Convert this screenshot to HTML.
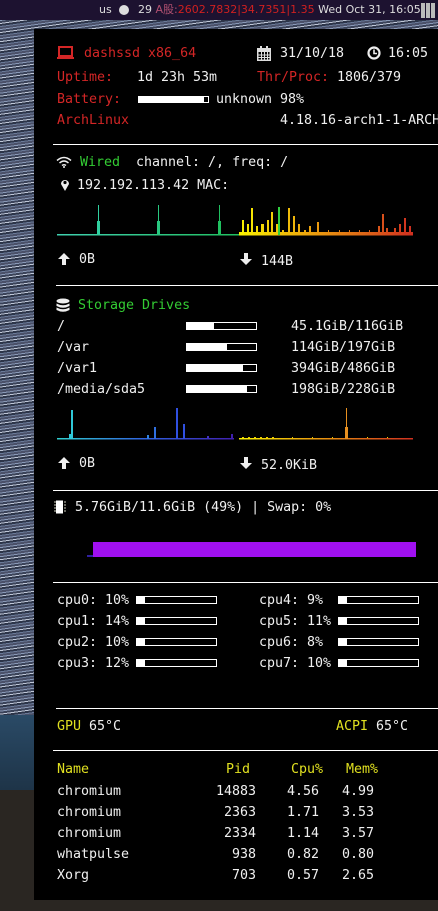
<!DOCTYPE html>
<html><head><meta charset="utf-8"><style>
*{margin:0;padding:0;box-sizing:border-box}
body{width:438px;height:911px;overflow:hidden;position:relative;background:#222;font-family:"DejaVu Sans Mono","Liberation Mono",monospace;font-size:13.3px;color:#f0f0f0}
#bar{position:absolute;left:0;top:0;width:438px;height:20px;background:#1d1230;font-family:"DejaVu Sans","Liberation Sans","Noto Sans CJK SC",sans-serif;font-size:11px;color:#ddd;line-height:20px;white-space:nowrap;overflow:hidden}
#bg{position:absolute;left:0;top:20px;width:438px;height:891px;
background:repeating-linear-gradient(172deg,#8a9ab8 0 1px,#3a4258 1px 3px,#c0c8d8 3px 4px,#2c3448 4px 6px,#6a7a98 6px 7px,#4a5068 7px 9px)}
#mt{position:absolute;left:0;top:715px;width:438px;height:75px;background:linear-gradient(#2a4a66,#1e3448)}
#gr{position:absolute;left:0;top:790px;width:438px;height:121px;background:#2a2622}
#p{position:absolute;left:34px;top:29px;width:404px;height:871px;background:#000}
.t{position:absolute;white-space:pre;line-height:16px}
.r{color:#d42626}.g{color:#33cc33}.y{color:#e0e020}
.hl{position:absolute;height:1px;background:#fff;right:0}
.b{position:absolute;height:8px;border:1px solid #fff}
.b i{display:block;height:100%;background:#fff}
.c{line-height:21px}
</style></head><body>
<div id="bg"></div><div id="mt"></div><div id="gr"></div>
<div id="bar"><span style="position:absolute;left:99px">us</span>
<span style="position:absolute;left:119px;top:5px;width:10px;height:10px;border-radius:50%;background:#ddd"></span>
<span style="position:absolute;left:138px">29 <span style="color:#b05070">A股:</span><span style="color:#d02020">2602.7832|34.7351|1.35</span> Wed Oct 31, 16:05</span>
<span style="position:absolute;left:421px;top:3px;width:15px;height:15px;background:repeating-linear-gradient(90deg,#bbb 0 4px,transparent 4px 5px),#1d1230"></span></div>
<div id="p"></div>

<svg style="position:absolute;left:57px;top:46px" width="17" height="14"><rect x="2" y="1" width="13" height="9" fill="none" stroke="#d42626" stroke-width="2"/><rect x="0" y="11" width="17" height="2" fill="#d42626"/></svg>
<div class="t r" style="left:84px;top:46px">dashssd x86_64</div>
<svg style="position:absolute;left:257px;top:46px" width="14" height="15"><rect x="0" y="2" width="14" height="13" fill="#ddd"/><rect x="1.5" y="6" width="11" height="7.5" fill="#000"/><path d="M1.5 9h11M1.5 11.5h11M4.5 6v8M7.5 6v8M10.5 6v8" stroke="#ddd"/><rect x="3" y="0" width="2" height="4" fill="#ddd"/><rect x="9" y="0" width="2" height="4" fill="#ddd"/></svg>
<div class="t" style="left:280px;top:46px">31/10/18</div>
<svg style="position:absolute;left:367px;top:46px" width="14" height="14"><circle cx="7" cy="7" r="5.5" fill="none" stroke="#eee" stroke-width="2.2"/><path d="M7 3.5v4h3" stroke="#eee" stroke-width="1.6" fill="none"/></svg>
<div class="t" style="left:388px;top:46px">16:05</div>
<div class="t r" style="left:57px;top:70px">Uptime:</div><div class="t" style="left:137px;top:70px">1d 23h 53m</div>
<div class="t r" style="left:257px;top:70px">Thr/Proc:</div><div class="t" style="left:337px;top:70px">1806/379</div>
<div class="t r" style="left:57px;top:92px">Battery:</div>
<div class="b" style="left:138px;top:96px;width:71px;height:7px"><i style="width:94%"></i></div>
<div class="t" style="left:216px;top:92px">unknown 98%</div>
<div class="t r" style="left:57px;top:113px">ArchLinux</div><div class="t" style="left:280px;top:113px">4.18.16-arch1-1-ARCH</div>
<div class="hl" style="left:53px;top:144px"></div>

<svg style="position:absolute;left:56px;top:156px" width="16" height="12"><path d="M1 4.5Q8 -1.5 15 4.5M3.5 7Q8 3 12.5 7M6 9.5Q8 8 10 9.5" stroke="#eee" stroke-width="1.5" fill="none"/><circle cx="8" cy="11" r="1" fill="#eee"/></svg>
<div class="t g" style="left:80px;top:155px">Wired</div><div class="t" style="left:136px;top:155px">channel: /, freq: /</div>
<svg style="position:absolute;left:60px;top:178px" width="10" height="14"><path d="M5 13L1 6A4 4 0 1 1 9 6Z" fill="#eee"/><circle cx="5" cy="4.5" r="1.6" fill="#000"/></svg>
<div class="t" style="left:77px;top:178px">192.192.113.42 MAC:</div>
<svg style="position:absolute;left:57px;top:200px" width="360" height="40">
<defs><linearGradient id="ga"><stop offset="0" stop-color="#40d0b0"/><stop offset="1" stop-color="#20c060"/></linearGradient>
<linearGradient id="gb"><stop offset="0" stop-color="#f8f000"/><stop offset="0.5" stop-color="#e89010"/><stop offset="1" stop-color="#d03020"/></linearGradient>
<linearGradient id="gc"><stop offset="0" stop-color="#30d0d0"/><stop offset="0.5" stop-color="#3060e0"/><stop offset="1" stop-color="#4020b0"/></linearGradient></defs>
<rect x="0" y="34" width="182" height="1.5" fill="url(#ga)"/>
<rect x="41" y="5" width="1" height="30" fill="#30d0a0"/><rect x="40" y="21" width="3" height="14" fill="#30d0a0"/>
<rect x="101" y="5" width="1" height="30" fill="#28c880"/><rect x="100" y="21" width="3" height="14" fill="#28c880"/>
<rect x="162" y="5" width="1" height="30" fill="#20c060"/><rect x="161" y="21" width="3" height="14" fill="#20c060"/>
<rect x="182" y="32" width="174" height="3.5" fill="url(#gb)"/>
<path fill="url(#gb)" d="M185 35V20h2v15zM190 35V24h2v11zM194 35V8h2v27zM199 35V26h2v9zM204 35V24h3v11zM210 35V20h2v15zM214 35V12h2v23zM219 35V24h2v11zM225 35V30h2v5zM231 35V8h2v27zM236 35V16h2v19zM241 35V24h2v11zM247 35V30h2v5zM252 35V26h2v9zM260 35V22h2v13zM271 35V30h1v5zM282 35V30h1v5zM292 35V30h1v5zM302 35V30h1v5zM312 35V30h1v5zM321 35V26h2v9zM325 35V14h2v21zM329 35V28h2v7zM337 35V28h2v7zM342 35V24h2v11zM347 35V18h2v17zM352 35V26h2v9z"/>
<rect x="221" y="7" width="2" height="28" fill="#30d040"/>
</svg>
<svg style="position:absolute;left:57px;top:252px" width="14" height="14"><path d="M7 1L1 7h4v6h4V7h4z" fill="#eee"/></svg>
<div class="t" style="left:79px;top:252px">0B</div>
<svg style="position:absolute;left:239px;top:252px" width="14" height="14"><path d="M7 13L1 7h4V1h4v6h4z" fill="#eee"/></svg>
<div class="t" style="left:261px;top:254px">144B</div>
<div class="hl" style="left:56px;top:285px"></div>

<svg style="position:absolute;left:56px;top:298px" width="14" height="16"><ellipse cx="7" cy="3" rx="6.5" ry="2.5" fill="#eee"/><path d="M0.5 5.5Q7 9 13.5 5.5v2.5Q7 11.5 0.5 8zM0.5 9.5Q7 13 13.5 9.5v2.5Q7 15.5 0.5 12z" fill="#eee"/></svg>
<div class="t g" style="left:78px;top:298px">Storage Drives</div>
<div class="t" style="left:57px;top:319px">/</div><div class="b" style="left:186px;top:322px;width:71px"><i style="width:39%"></i></div><div class="t" style="left:291px;top:319px">45.1GiB/116GiB</div>
<div class="t" style="left:57px;top:340px">/var</div><div class="b" style="left:186px;top:343px;width:71px"><i style="width:58%"></i></div><div class="t" style="left:291px;top:340px">114GiB/197GiB</div>
<div class="t" style="left:57px;top:361px">/var1</div><div class="b" style="left:186px;top:364px;width:71px"><i style="width:81%"></i></div><div class="t" style="left:291px;top:361px">394GiB/486GiB</div>
<div class="t" style="left:57px;top:382px">/media/sda5</div><div class="b" style="left:186px;top:385px;width:71px"><i style="width:87%"></i></div><div class="t" style="left:291px;top:382px">198GiB/228GiB</div>
<svg style="position:absolute;left:57px;top:405px" width="360" height="36">
<rect x="0" y="33" width="177" height="1.5" fill="url(#gc)"/>
<rect x="14" y="5" width="2" height="29" fill="#30c8d8"/><rect x="12" y="29" width="4" height="5" fill="#30c8d8"/>
<rect x="90" y="30" width="2" height="4" fill="#3080e0"/><rect x="97" y="22" width="2" height="12" fill="#3070e0"/>
<rect x="119" y="3" width="2" height="31" fill="#3050e0"/><rect x="126" y="19" width="2" height="15" fill="#3050e0"/>
<rect x="150" y="31" width="2" height="3" fill="#4030c0"/><rect x="174" y="29" width="2" height="5" fill="#4020b0"/>
<rect x="182" y="33" width="174" height="1.5" fill="url(#gb)"/>
<path d="M185 33h2v-1h-2zM191 33h2v-1h-2zM197 33h2v-1h-2zM203 33h2v-1h-2zM209 33h2v-1h-2zM215 33h2v-1h-2zM235 33h1v-1h-1zM255 33h1v-1h-1zM275 33h1v-1h-1zM310 33h1v-1h-1zM330 33h1v-1h-1z" fill="#e8d000"/>
<rect x="289" y="3" width="1" height="31" fill="#e89020"/><rect x="288" y="22" width="3" height="12" fill="#e89020"/>
</svg>
<svg style="position:absolute;left:57px;top:456px" width="14" height="14"><path d="M7 1L1 7h4v6h4V7h4z" fill="#eee"/></svg>
<div class="t" style="left:79px;top:456px">0B</div>
<svg style="position:absolute;left:239px;top:456px" width="14" height="14"><path d="M7 13L1 7h4V1h4v6h4z" fill="#eee"/></svg>
<div class="t" style="left:261px;top:458px">52.0KiB</div>
<div class="hl" style="left:53px;top:490px"></div>

<svg style="position:absolute;left:54px;top:500px" width="12" height="15"><rect x="2" y="0.5" width="7" height="13" fill="#fff"/><path d="M10 2h2M10 5h2M10 8h2M10 11h2M0 2h2M0 5h2M0 8h2M0 11h2" stroke="#ccb" stroke-width="1"/></svg>
<div class="t" style="left:75px;top:500px">5.76GiB/11.6GiB (49%) | Swap: 0%</div>
<div style="position:absolute;left:87px;top:555px;width:6px;height:2px;background:#3020a0"></div>
<div style="position:absolute;left:93px;top:542px;width:323px;height:15px;background:#a010f0"></div>
<div class="hl" style="left:53px;top:582px"></div>

<div class="t" style="left:57px;top:593px">cpu0: 10%</div><div class="b" style="left:136px;top:596px;width:81px"><i style="width:10%"></i></div>
<div class="t" style="left:57px;top:614px">cpu1: 14%</div><div class="b" style="left:136px;top:617px;width:81px"><i style="width:10%"></i></div>
<div class="t" style="left:57px;top:635px">cpu2: 10%</div><div class="b" style="left:136px;top:638px;width:81px"><i style="width:10%"></i></div>
<div class="t" style="left:57px;top:656px">cpu3: 12%</div><div class="b" style="left:136px;top:659px;width:81px"><i style="width:10%"></i></div>
<div class="t" style="left:259px;top:593px">cpu4: 9%</div><div class="b" style="left:338px;top:596px;width:81px"><i style="width:10%"></i></div>
<div class="t" style="left:259px;top:614px">cpu5: 11%</div><div class="b" style="left:338px;top:617px;width:81px"><i style="width:10%"></i></div>
<div class="t" style="left:259px;top:635px">cpu6: 8%</div><div class="b" style="left:338px;top:638px;width:81px"><i style="width:10%"></i></div>
<div class="t" style="left:259px;top:656px">cpu7: 10%</div><div class="b" style="left:338px;top:659px;width:81px"><i style="width:10%"></i></div>
<div class="hl" style="left:56px;top:708px"></div>

<div class="t" style="left:57px;top:719px"><span class="y">GPU</span> 65°C</div>
<div class="t" style="left:336px;top:719px"><span class="y">ACPI</span> 65°C</div>
<div class="hl" style="left:53px;top:750px"></div>

<div class="t y" style="left:57px;top:762px">Name</div>
<div class="t y" style="left:226px;top:762px">Pid</div>
<div class="t y" style="left:291px;top:762px">Cpu%</div>
<div class="t y" style="left:346px;top:762px">Mem%</div>
<div class="t c" style="left:57px;top:781px">chromium
chromium
chromium
whatpulse
Xorg</div>
<div class="t c" style="left:215px;top:781px;text-align:right;width:41px">14883
2363
2334
938
703</div>
<div class="t c" style="left:287px;top:781px">4.56
1.71
1.14
0.82
0.57</div>
<div class="t c" style="left:342px;top:781px">4.99
3.53
3.57
0.80
2.65</div>
</body></html>
